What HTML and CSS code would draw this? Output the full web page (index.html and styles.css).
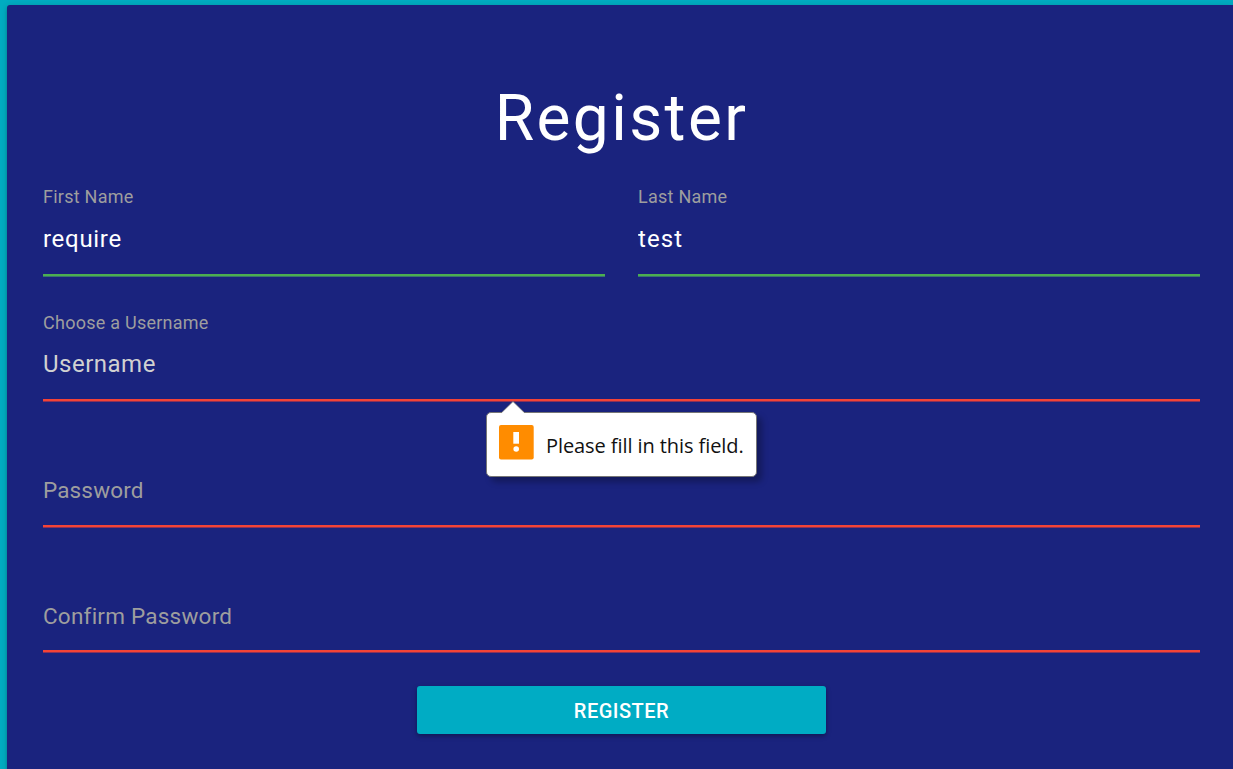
FILE: index.html
```
<!DOCTYPE html>
<html lang="en">
<head>
<meta charset="utf-8">
<title>Register</title>
<link rel="stylesheet" href="styles.css">
</head>
<body>
<main class="card">
  <h1 class="title">Register</h1>
  <form class="form" novalidate>
    <div class="row">
      <div class="field valid">
        <label class="label first" for="first">First Name</label>
        <input class="input require" id="first" type="text" value="require">
      </div>
      <div class="field valid">
        <label class="label last" for="last">Last Name</label>
        <input class="input test" id="last" type="text" value="test">
      </div>
    </div>
    <div class="field invalid username">
      <label class="label choose" for="user">Choose a Username</label>
      <input class="input user" id="user" type="text" placeholder="Username">
      <div class="tooltip">
        <svg class="arrow" width="26" height="13" viewBox="0 0 26 13"><path d="M0 12.5 1.5 12 13 .5 24.500 12 26 12.500V13H0z" fill="#fff"/><path d="M1 12 13 .5 25 12" fill="none" stroke="#767676" stroke-width=".8"/></svg>
        <svg class="warning" width="35" height="35" viewBox="0 0 35 35"><rect width="34.700" height="34.500" rx="2" fill="#ff8c00"/><path d="M14.300 7h5.700v11.700h-5.700z" fill="#fff"/><circle cx="17.200" cy="24" r="2.800" fill="#fff"/></svg>
        <span class="message">Please fill in this field.</span>
      </div>
    </div>
    <div class="field invalid password">
      <label class="resting pw">Password</label>
    </div>
    <div class="field invalid confirm">
      <label class="resting cpw">Confirm Password</label>
    </div>
    <button class="submit" type="button">REGISTER</button>
  </form>
</main>
</body>
</html>
```
FILE: styles.css
```
* { box-sizing: border-box; }
html { height: 100%; overflow: hidden; }
body {
  height: 100%;
  margin: 0;
  padding: 5px 0 0 7px;
  overflow: hidden;
  background: #00acc1;
  font-family: Roboto, "Noto Sans", sans-serif;
}
.card {
  height: 800px;
  padding: 76px 33px 0 36px;
  border-radius: 3px 0 0 0;
  background: #1a237e;
  box-shadow: 0 2px 3px rgba(0, 0, 0, .2), 0 1px 6px rgba(0, 0, 0, .15);
}
.title {
  height: 75px;
  margin: 0;
  color: #fff;
  font-size: 64px;
  font-weight: 400;
  line-height: 75px;
  letter-spacing: 2.400px;
  text-align: center;
}
.form { display: flex; flex-direction: column; padding-top: 26px; }
.row { display: grid; grid-template-columns: 562px 562px; gap: 33px; }
.field {
  position: relative;
  display: flex;
  flex-direction: column;
  height: 94px;
  border-bottom: 2px solid #4caf50;
}
.valid { box-shadow: 0 1px #397570; }
.invalid { border-color: #f44336; box-shadow: 0 1px #8b3159; }
.username { margin-top: 31px; }
.password, .confirm { justify-content: flex-end; }
.password { margin-top: 32px; }
.confirm { margin-top: 31px; }
.label {
  height: 28px;
  padding-top: 3px;
  color: #9e9e9e;
  font-size: 18px;
  line-height: 24px;
  letter-spacing: .25px;
}
.choose { padding-top: 4px; }
.input {
  width: 100%;
  height: 60px;
  padding: 0 0 2px;
  border: 0;
  outline: 0;
  background: transparent;
  color: #fff;
  font: 24px/54px Roboto, "Noto Sans", sans-serif;
}
.require { letter-spacing: .700px; }
.test { letter-spacing: 1.100px; }
.user { letter-spacing: .500px; }
.input::placeholder { color: #d1d1d1; opacity: 1; }
.resting {
  height: 49px;
  color: #9e9e9e;
  font-size: 22.500px;
  line-height: 28px;
  letter-spacing: .150px;
}
.cpw { height: 48px; letter-spacing: .230px; }
.tooltip {
  position: absolute;
  top: 105px;
  left: 443px;
  display: flex;
  width: 271px;
  height: 65px;
  padding: 12px 0 0 12px;
  border: 1px solid #767676;
  border-radius: 5px;
  background: #fff;
  box-shadow: 5px 5px 6px rgba(0, 0, 0, .28);
}
.arrow { position: absolute; top: -12px; left: 13px; }
.warning { flex: none; }
.message {
  margin-left: 12px;
  color: #111;
  font: 20px/42px "Open Sans", "Noto Sans", sans-serif;
  letter-spacing: -.080px;
  white-space: nowrap;
}
.submit {
  align-self: center;
  width: 409px;
  height: 48px;
  margin-top: 34px;
  padding: 1px 0 0;
  border: 0;
  border-radius: 3px;
  background: #00acc4;
  box-shadow: 0 2px 5px rgba(0, 0, 0, .35);
  color: #fff;
  font: 500 20px/24px Roboto, "Noto Sans", sans-serif;
  letter-spacing: .500px;
}
```
